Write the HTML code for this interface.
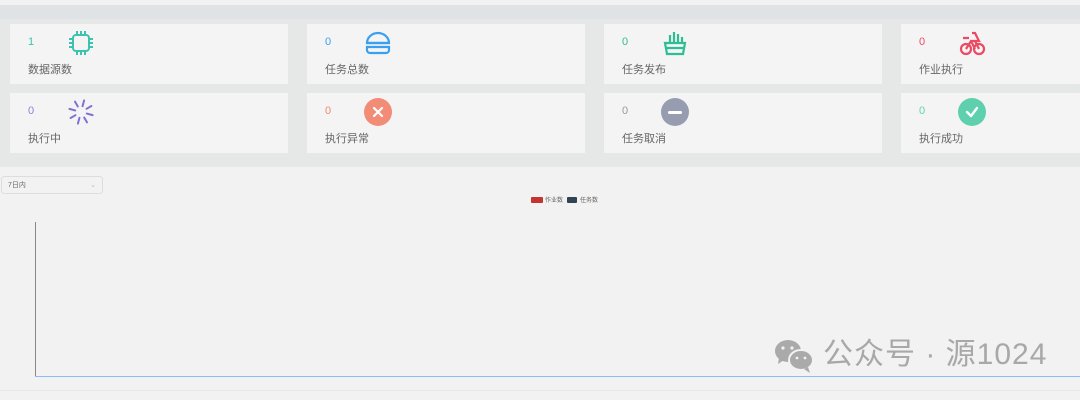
<!DOCTYPE html>
<html><head><meta charset="utf-8"><style>
body{margin:0;width:1080px;height:400px;background:#f2f2f2;font-family:"Liberation Sans","Noto Sans CJK SC",sans-serif;position:relative;overflow:hidden}
.band{position:absolute;left:0;top:5px;width:1080px;height:14px;background:#e0e3e6}
.sec{position:absolute;left:0;top:19px;width:1080px;height:148px;background:#e6e8e8}
.card{position:absolute;width:278px;height:60px;background:#f4f4f4}
.n{position:absolute;left:18px;top:12px;font-size:11px}
.l{position:absolute;left:18px;top:37px;font-size:11px;color:#666}
.ic{position:absolute;left:57px;top:5px;width:28px;height:28px}
.circ{border-radius:50%;display:flex;align-items:center;justify-content:center}
</style></head><body>
<div class="band"></div>
<div class="sec"></div>
<div class="card" style="left:10px;top:24px"><div class="n" style="color:#3cc3b0">1</div><div class="l">数据源数</div>
<svg class="ic" viewBox="0 0 28 28" fill="none" stroke="#3cc3b0" stroke-width="2"><rect x="6" y="6" width="16" height="16" rx="3"/><path d="M10 2v4M14 2v4M18 2v4M10 22v4M14 22v4M18 22v4M2 10h4M2 14h4M2 18h4M22 10h4M22 14h4M22 18h4"/></svg></div>
<div class="card" style="left:307px;top:24px"><div class="n" style="color:#3a9ff0">0</div><div class="l">任务总数</div>
<svg class="ic" viewBox="0 0 28 28" fill="none" stroke="#3a9ff0" stroke-width="2.2"><path d="M3 14a11 10 0 0 1 22 0z"/><path d="M3 14h22M3 18h22v3a3 3 0 0 1-3 3H6a3 3 0 0 1-3-3z"/></svg></div>
<div class="card" style="left:604px;top:24px"><div class="n" style="color:#2ebd95">0</div><div class="l">任务发布</div>
<svg class="ic" viewBox="0 0 28 28" fill="none" stroke="#2ebd95" stroke-width="2.2"><path d="M4 14h20l-2 11H6z"/><path d="M4 19h20M9 14V6M13 14V3M17 14V5M21 14V8"/></svg></div>
<div class="card" style="left:901px;top:24px;width:180px"><div class="n" style="color:#ea4a64">0</div><div class="l">作业执行</div>
<svg class="ic" viewBox="0 0 28 28" fill="none" stroke="#ea4a64" stroke-width="2.2"><circle cx="8" cy="20" r="5"/><circle cx="21" cy="20" r="5"/><path d="M8 20l5-8h8l-4-8h-3M13 12l4 8M21 20l-4-8M5 9h6"/></svg></div>
<div class="card" style="left:10px;top:93px"><div class="n" style="color:#8d82d6">0</div><div class="l">执行中</div>
<svg class="ic" viewBox="0 0 28 28" fill="none" stroke="#8072d2" stroke-width="2" stroke-linecap="round"><path d="M14 2v6M14 20v6M2 14h6M20 14h6M5.5 5.5l4 4M18.5 18.5l4 4M22.5 5.5l-4 4M9.5 18.5l-4 4" transform="rotate(15 14 14)"/></svg></div>
<div class="card" style="left:307px;top:93px"><div class="n" style="color:#f08a70">0</div><div class="l">执行异常</div>
<div class="ic circ" style="background:#f28c77"><svg width="12" height="12" viewBox="0 0 12 12" stroke="#fff" stroke-width="2.2" stroke-linecap="round"><path d="M2 2l8 8M10 2l-8 8"/></svg></div></div>
<div class="card" style="left:604px;top:93px"><div class="n" style="color:#999">0</div><div class="l">任务取消</div>
<div class="ic circ" style="background:#989cb0"><div style="width:14px;height:3px;background:#fff;border-radius:2px"></div></div></div>
<div class="card" style="left:901px;top:93px;width:180px"><div class="n" style="color:#5fd3ae">0</div><div class="l">执行成功</div>
<div class="ic circ" style="background:#5ed0ae"><svg width="14" height="12" viewBox="0 0 14 12" fill="none" stroke="#fff" stroke-width="2.4" stroke-linecap="round" stroke-linejoin="round"><path d="M2 6l4 4 6-8"/></svg></div></div>

<div style="position:absolute;left:1px;top:176px;width:102px;height:18px;border:1px solid #ddd;border-radius:3px;font-size:7px;color:#666;line-height:18px;padding-left:6px;box-sizing:border-box">7日内<span style="position:absolute;right:6px;top:0;color:#bbb">⌄</span></div>
<div style="position:absolute;left:531px;top:197px;width:12px;height:6px;background:#c23531;border-radius:1px"></div>
<div style="position:absolute;left:545px;top:195px;font-size:6px;color:#666">作业数</div>
<div style="position:absolute;left:567px;top:197px;width:10px;height:6px;background:#2f4554;border-radius:1px"></div>
<div style="position:absolute;left:580px;top:195px;font-size:6px;color:#666">任务数</div>
<div style="position:absolute;left:35px;top:222px;width:1px;height:155px;background:#888"></div>
<div style="position:absolute;left:35px;top:376px;width:1045px;height:1px;background:#8bbcf5"></div>
<div style="position:absolute;left:0;top:390px;width:1080px;height:1px;background:#e8e8e8"></div>
<svg style="position:absolute;left:774px;top:338px" width="42" height="36" viewBox="0 0 42 36"><ellipse cx="14" cy="13" rx="13" ry="11" fill="#aaa"/><path d="M5 20l-1 6 6-4z" fill="#aaa"/><ellipse cx="27" cy="22" rx="12" ry="10" fill="#aaa" stroke="#f2f2f2" stroke-width="2"/><path d="M34 29l2 6-6-4z" fill="#aaa"/><circle cx="9" cy="10" r="1.6" fill="#f2f2f2"/><circle cx="18" cy="10" r="1.6" fill="#f2f2f2"/><circle cx="23" cy="20" r="1.4" fill="#f2f2f2"/><circle cx="31" cy="20" r="1.4" fill="#f2f2f2"/></svg>
<div style="position:absolute;left:823px;top:337px;font-size:30px;color:#a8a8a8;line-height:36px;white-space:nowrap;letter-spacing:1px">公众号 · 源1024</div>
</body></html>
